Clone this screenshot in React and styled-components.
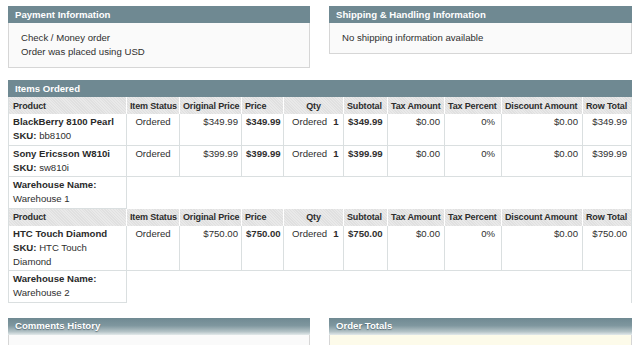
import React from 'react';
import styled, { createGlobalStyle } from 'styled-components';

const GlobalStyle = createGlobalStyle`
  html, body {
    margin: 0;
    padding: 0;
    overflow: hidden;
    background: #fff;
  }
  body {
    font-family: "Liberation Sans", Arial, sans-serif;
    font-size: 9.6px;
    line-height: 14px;
    color: #2f2f2f;
  }
`;

const Page = styled.div`
  padding: 6px 8px;
`;

const Columns = styled.div`
  display: grid;
  grid-template-columns: 302px 303px;
  column-gap: 19px;
`;

const Section = styled.div`
  margin-bottom: ${p => p.$gap || 12}px;
`;

const Head = styled.div`
  height: 17px;
  padding: 0 7px;
  display: flex;
  align-items: center;
  background: ${p => p.$fade
    ? 'linear-gradient(to bottom, #6f8992 0%, #7f979f 45%, #b3c2c6 80%, #e4eaeb 100%)'
    : '#6f8992'};
`;

const Title = styled.h4`
  margin: 0;
  font-size: 9.6px;
  font-weight: bold;
  color: #fff;
  text-shadow: ${p => p.$fade ? '0 1px 1px rgba(40,60,70,0.6)' : 'none'};
`;

const Fieldset = styled.div`
  border: 1px solid #d6d6d6;
  border-top: 0;
  background: ${p => p.$tone || '#fafafa'};
  padding: 8px 12px;
  min-height: ${p => p.$min || 0}px;
`;

const Table = styled.table`
  width: 624px;
  table-layout: fixed;
  border-collapse: separate;
  border-spacing: 0;
`;

const HeadCell = styled.th`
  height: 17px;
  padding: 0 3px;
  box-sizing: border-box;
  text-align: ${p => p.$align || 'left'};
  font-size: 9px;
  letter-spacing: -0.15px;
  font-weight: bold;
  color: #2d2d2d;
  white-space: nowrap;
  overflow: hidden;
  background: repeating-linear-gradient(45deg, #e9e9e9 0 1px, #e0e0e0 1px 2px);
  border-right: 1px solid #fff;
  &:first-child { border-left: 1px solid #dadfe0; padding-left: 4px; }
  &:last-child { border-right: 1px solid #dadfe0; }
`;

const Cell = styled.td`
  padding: 1px 4px 1.5px;
  vertical-align: top;
  text-align: ${p => p.$align || 'left'};
  font-weight: ${p => p.$strong ? 'bold' : 'normal'};
  padding-right: ${p => p.$right ?? 4}px;
  background: #fff;
  border-right: 1px solid #dadfe0;
  border-bottom: 1px solid #dadfe0;
  &:first-child { border-left: 1px solid #dadfe0; }
`;

const Filler = styled.td`
  border-right: 1px solid #dadfe0;
`;

const Strong = styled.span`
  font-weight: bold;
  color: #2a2a2a;
`;

const Line = styled.div``;

const QtyRow = styled.div`
  display: flex;
  gap: 6px;
  padding-left: 4px;
`;

const columns = [
  { label: 'Product', width: 119 },
  { label: 'Item Status', width: 53 },
  { label: 'Original Price', width: 62 },
  { label: 'Price', width: 42 },
  { label: 'Qty', width: 60, align: 'center' },
  { label: 'Subtotal', width: 44 },
  { label: 'Tax Amount', width: 57 },
  { label: 'Tax Percent', width: 57 },
  { label: 'Discount Amount', width: 81 },
  { label: 'Row Total', width: 49 },
];

const warehouses = [
  {
    name: 'Warehouse 1',
    items: [
      { name: 'BlackBerry 8100 Pearl', sku: 'bb8100', price: '$349.99' },
      { name: 'Sony Ericsson W810i', sku: 'sw810i', price: '$399.99' },
    ],
  },
  {
    name: 'Warehouse 2',
    items: [
      { name: 'HTC Touch Diamond', sku: 'HTC Touch Diamond', price: '$750.00' },
    ],
  },
];

function HeaderRow() {
  return (
    <tr>
      {columns.map(c => (
        <HeadCell key={c.label} $align={c.align}>{c.label}</HeadCell>
      ))}
    </tr>
  );
}

function ItemRow({ item }) {
  return (
    <tr>
      <Cell>
        <Line><Strong>{item.name}</Strong></Line>
        <Line><Strong>SKU:</Strong> {item.sku}</Line>
      </Cell>
      <Cell $align="center">Ordered</Cell>
      <Cell $align="right" $right={3}>{item.price}</Cell>
      <Cell $align="right" $strong>{item.price}</Cell>
      <Cell>
        <QtyRow>
          <span>Ordered</span>
          <Strong>1</Strong>
        </QtyRow>
      </Cell>
      <Cell $strong>{item.price}</Cell>
      <Cell $align="right">$0.00</Cell>
      <Cell $align="right" $right={6}>0%</Cell>
      <Cell $align="right">$0.00</Cell>
      <Cell $align="right">{item.price}</Cell>
    </tr>
  );
}

function ItemsOrdered() {
  return (
    <Section $gap={15}>
      <Head><Title>Items Ordered</Title></Head>
      <Table>
        <colgroup>
          {columns.map(c => <col key={c.label} style={{ width: c.width }} />)}
        </colgroup>
        <tbody>
          {warehouses.map(w => (
            <React.Fragment key={w.name}>
              <HeaderRow />
              {w.items.map(item => <ItemRow key={item.sku} item={item} />)}
              <tr>
                <Cell>
                  <Line><Strong>Warehouse Name:</Strong></Line>
                  <Line>{w.name}</Line>
                </Cell>
                <Filler colSpan={9} />
              </tr>
            </React.Fragment>
          ))}
        </tbody>
      </Table>
    </Section>
  );
}

export default function App() {
  return (
    <>
      <GlobalStyle />
      <Page>
        <Columns>
          <Section>
            <Head><Title>Payment Information</Title></Head>
            <Fieldset>
              <Line>Check / Money order</Line>
              <Line>Order was placed using USD</Line>
            </Fieldset>
          </Section>
          <Section>
            <Head><Title>Shipping &amp; Handling Information</Title></Head>
            <Fieldset>
              <Line>No shipping information available</Line>
            </Fieldset>
          </Section>
        </Columns>

        <ItemsOrdered />

        <Columns>
          <Section>
            <Head $fade><Title $fade>Comments History</Title></Head>
            <Fieldset $min={60} />
          </Section>
          <Section>
            <Head $fade><Title $fade>Order Totals</Title></Head>
            <Fieldset $tone="#fdfbea" $min={60} />
          </Section>
        </Columns>
      </Page>
    </>
  );
}
